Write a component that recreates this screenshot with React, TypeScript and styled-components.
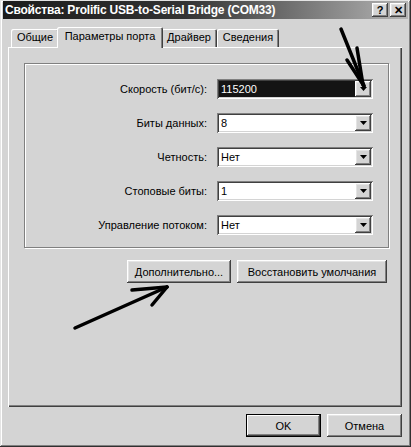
import React from "react";
import styled, { createGlobalStyle, css } from "styled-components";

const Global = createGlobalStyle`
  html, body {
    margin: 0;
    padding: 0;
    background: #d4d4d4;
  }
  * {
    box-sizing: border-box;
  }
`;

const Window = styled.div`
  position: relative;
  width: 411px;
  height: 447px;
  padding: 1px 3px 3px 3px;
  background: #d4d4d4;
  font-family: "Liberation Sans", Arial, sans-serif;
  font-size: 11px;
  color: #000;
  box-shadow: inset -1px -1px #303030, inset 1px 1px #e4e4e4,
    inset -2px -2px #808080, inset 2px 2px #fff;
  display: flex;
  flex-direction: column;
`;

const TitleBar = styled.div`
  height: 18px;
  display: flex;
  align-items: center;
  justify-content: space-between;
  padding: 0 2px 0 2px;
  background: linear-gradient(90deg, #1c1c1c 0%, #333 45%, #b4b4b4 100%);
`;

const Title = styled.span`
  color: #fff;
  font-weight: bold;
  font-size: 12px;
  letter-spacing: -0.2px;
  white-space: nowrap;
`;

const TitleButtons = styled.div`
  display: flex;
  gap: 2px;
`;

const raised = css`
  background: #d4d4d4;
  box-shadow: inset -1px -1px #404040, inset 1px 1px #fff,
    inset -2px -2px #808080, inset 2px 2px #e4e4e4;
`;

const CaptionButton = styled.div`
  ${raised};
  width: 16px;
  height: 14px;
  display: flex;
  align-items: center;
  justify-content: center;
  font-weight: bold;
  font-size: 11px;
  line-height: 1;
`;

const Body = styled.div`
  padding: 0 6px 0 5px;
  display: flex;
  flex-direction: column;
  flex: 1;
`;

const TabRow = styled.div`
  margin-top: 8px;
  height: 20px;
  display: flex;
  align-items: flex-end;
  padding-left: 3px;
  position: relative;
  z-index: 2;
`;

const Tab = styled.div<{ $w: number; $active?: boolean }>`
  width: ${(p) => p.$w}px;
  height: ${(p) => (p.$active ? 21 : 18)}px;
  margin: ${(p) => (p.$active ? "0 -2px -1px -2px" : "0")};
  padding-top: ${(p) => (p.$active ? 3 : 2)}px;
  text-align: center;
  background: #d4d4d4;
  border-radius: 2px 2px 0 0;
  box-shadow: inset 1px 1px #fff, inset -1px 0 #404040, inset -2px 0 #808080;
  position: relative;
  z-index: ${(p) => (p.$active ? 2 : 1)};
  white-space: nowrap;
`;

const Panel = styled.div`
  height: 360px;
  padding: 16px 13px 0 16px;
  background: #d4d4d4;
  box-shadow: inset 1px 1px #fff, inset -1px -1px #404040,
    inset -2px -2px #808080;
  display: flex;
  flex-direction: column;
`;

const GroupBox = styled.div`
  height: 185px;
  border: 1px solid #808080;
  box-shadow: inset 1px 1px #fff, 1px 1px #fff;
  display: grid;
  grid-template-columns: 182px 156px;
  grid-auto-rows: 20px;
  column-gap: 10px;
  row-gap: 14px;
  padding-top: 15px;
  align-content: start;
`;

const Label = styled.div`
  text-align: right;
  line-height: 20px;
  white-space: nowrap;
`;

const Combo = styled.div`
  height: 20px;
  display: flex;
  padding: 2px;
  background: #fff;
  box-shadow: inset 1px 1px #808080, inset -1px -1px #fff,
    inset 2px 2px #404040, inset -2px -2px #d4d4d4;
`;

const ComboValue = styled.div<{ $focused?: boolean }>`
  flex: 1;
  line-height: 16px;
  padding-left: 2px;
  background: ${(p) => (p.$focused ? "#141414" : "#fff")};
  color: ${(p) => (p.$focused ? "#fff" : "#000")};
`;

const DropButton = styled.div`
  ${raised};
  width: 16px;
  height: 16px;
  display: flex;
  align-items: center;
  justify-content: center;
`;

const ButtonRow = styled.div<{ $top: number; $right: number }>`
  margin-top: ${(p) => p.$top}px;
  padding-right: ${(p) => p.$right}px;
  display: flex;
  justify-content: flex-end;
  gap: 6px;
`;

const Button = styled.div<{ $w: number; $default?: boolean }>`
  ${raised};
  width: ${(p) => p.$w}px;
  height: 23px;
  display: flex;
  align-items: center;
  justify-content: center;
  white-space: nowrap;
  ${(p) =>
    p.$default &&
    css`
      box-shadow: inset 0 0 0 1px #000, inset -2px -2px #404040,
        inset 2px 2px #fff, inset -3px -3px #808080;
    `}
`;

const Overlay = styled.svg`
  position: absolute;
  left: 0;
  top: 0;
  pointer-events: none;
`;

const Arrow = () => (
  <svg width="7" height="4" viewBox="0 0 7 4">
    <path d="M0 0h7L3.5 4z" fill="#000" />
  </svg>
);

const rows = [
  { label: "Скорость (бит/с):", value: "115200", focused: true },
  { label: "Биты данных:", value: "8" },
  { label: "Четность:", value: "Нет" },
  { label: "Стоповые биты:", value: "1" },
  { label: "Управление потоком:", value: "Нет" },
];

export default function App() {
  return (
    <>
      <Global />
      <Window>
        <TitleBar>
          <Title>Свойства: Prolific USB-to-Serial Bridge (COM33)</Title>
          <TitleButtons>
            <CaptionButton>?</CaptionButton>
            <CaptionButton>✕</CaptionButton>
          </TitleButtons>
        </TitleBar>
        <Body>
          <TabRow>
            <Tab $w={48}>Общие</Tab>
            <Tab $w={106} $active>
              Параметры порта
            </Tab>
            <Tab $w={56}>Драйвер</Tab>
            <Tab $w={62}>Сведения</Tab>
          </TabRow>
          <Panel>
            <GroupBox>
              {rows.map((r) => (
                <React.Fragment key={r.label}>
                  <Label>{r.label}</Label>
                  <Combo>
                    <ComboValue $focused={r.focused}>{r.value}</ComboValue>
                    <DropButton>
                      <Arrow />
                    </DropButton>
                  </Combo>
                </React.Fragment>
              ))}
            </GroupBox>
            <ButtonRow $top={12} $right={2}>
              <Button $w={104}>Дополнительно...</Button>
              <Button $w={150}>Восстановить умолчания</Button>
            </ButtonRow>
          </Panel>
          <ButtonRow $top={7} $right={0}>
            <Button $w={75} $default>
              OK
            </Button>
            <Button $w={75}>Отмена</Button>
          </ButtonRow>
        </Body>
        <Overlay width="411" height="447">
          <g stroke="#000" strokeWidth="3.5" strokeLinecap="round" fill="none">
            <path d="M341 29 L364 86" />
            <path d="M347 60 L364 86" />
            <path d="M357 48 L363 85" />
            <path d="M75 328 L167 287" />
            <path d="M132 290 L167 287" />
            <path d="M152 305 L167 287" />
          </g>
        </Overlay>
      </Window>
    </>
  );
}
